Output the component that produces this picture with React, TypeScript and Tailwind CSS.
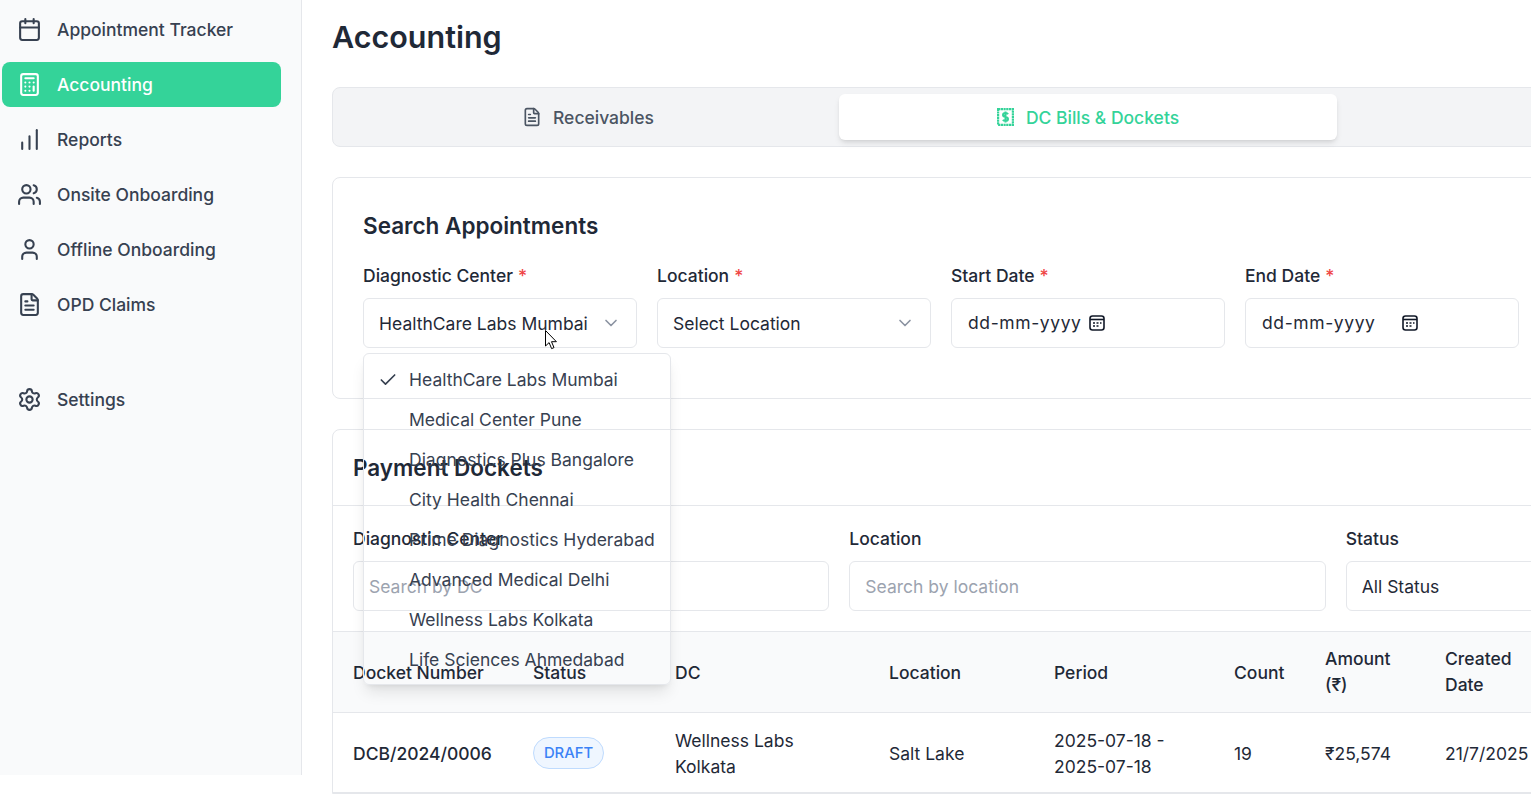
import React from 'react';
import { Calculator, Calendar, ChartNoAxesColumnIncreasing, Check, ChevronDown, FileText, Settings, User, Users } from 'lucide-react';

const navItems = [
  { label: 'Appointment Tracker', icon: Calendar },
  { label: 'Accounting', icon: Calculator, active: true },
  { label: 'Reports', icon: ChartNoAxesColumnIncreasing },
  { label: 'Onsite Onboarding', icon: Users },
  { label: 'Offline Onboarding', icon: User },
  { label: 'OPD Claims', icon: FileText },
];

const centers = [
  'HealthCare Labs Mumbai',
  'Medical Center Pune',
  'Diagnostics Plus Bangalore',
  'City Health Chennai',
  'Prime Diagnostics Hyderabad',
  'Advanced Medical Delhi',
  'Wellness Labs Kolkata',
  'Life Sciences Ahmedabad',
];

const NavLink: React.FC<{ label: string; icon: React.ElementType; active?: boolean }> = ({ label, icon: Icon, active }) => (
  <div className={`flex h-[45px] w-[279px] items-center gap-[15px] rounded-lg pl-[15px] text-[17.5px] font-medium ${active ? 'bg-[#34d399] text-white' : 'text-[#374151]'}`}>
    <Icon className="h-[25px] w-[25px] shrink-0" strokeWidth={2} />
    <span className="translate-y-px">{label}</span>
  </div>
);

const Label: React.FC<{ text: string; required?: boolean }> = ({ text, required }) => (
  <div className="text-[17.5px] leading-[24px] font-medium text-[#1f2937]">
    {text}
    {required && <span className="ml-[5px] text-[#ef4444]">*</span>}
  </div>
);

const DateIcon = () => (
  <svg viewBox="0 0 16 16" className="h-4 w-4 shrink-0" fill="none" stroke="#111827" strokeWidth="1.6">
    <rect x="1" y="1" width="14" height="14" rx="2.5" />
    <path d="M1 4.5h14" />
    <path d="M4 8h2M7.5 8h2M11 8h1.5M4 11h2M7.5 11h2" strokeWidth="1.7" />
  </svg>
);

const BillIcon = () => (
  <svg viewBox="0 0 17 18" className="h-[18px] w-[17px] shrink-0" fill="none" stroke="#34d399">
    <rect x="1.1" y="1.1" width="14.8" height="15.8" strokeWidth="2.2" strokeDasharray="2.2 0.5" />
    <path d="M11 6.2C10.6 5.4 9.6 5 8.5 5 7 5 6 5.8 6 7s1 1.7 2.5 2 2.5.8 2.5 2-1 2-2.5 2c-1.1 0-2.1-.4-2.5-1.2M8.5 3.5v11" strokeWidth="2" />
  </svg>
);

const DateField: React.FC<{ label: string; iconGap: string }> = ({ label, iconGap }) => (
  <div>
    <Label text={label} required />
    <div className="mt-[10px] flex h-[50px] items-center rounded-md border border-[#e5e7eb] pl-[16px] text-[17.5px] tracking-[0.6px] text-[#1f2937]">
      <span>dd-mm-yyyy</span>
      <span className={iconGap}>
        <DateIcon />
      </span>
    </div>
  </div>
);

const SelectField: React.FC<{ label: string; value: string }> = ({ label, value }) => (
  <div>
    <Label text={label} required />
    <div className="mt-[10px] flex h-[50px] items-center justify-between rounded-md border border-[#e5e7eb] pr-[15px] pl-[15px] text-[17.5px] text-[#1f2937]">
      <span className="translate-y-px">{value}</span>
      <ChevronDown className="h-5 w-5 text-[#8b93a1]" />
    </div>
  </div>
);

const App: React.FC = () => {
  return (
    <div className="flex h-[805px] w-[1531px] overflow-hidden bg-white font-['Inter',sans-serif]">
      <aside className="flex h-[775px] w-[302px] shrink-0 flex-col gap-[10px] border-r border-[#e5e7eb] bg-[#f9fafb] pt-[7px] pl-[2px]">
        {navItems.map((item) => (
          <NavLink key={item.label} {...item} />
        ))}
        <div className="mt-[40px]">
          <NavLink label="Settings" icon={Settings} />
        </div>
      </aside>

      <main className="relative w-[1571px] shrink-0 px-[30px]">
        <h1 className="pt-[17px] text-[30.5px] leading-[40px] font-semibold text-[#1f2937]">Accounting</h1>

        {/* tabs */}
        <div className="mt-[30px] grid h-[60px] grid-cols-[repeat(3,498px)] gap-[2px] rounded-lg border border-[#e5e7eb] bg-[#f3f4f6] p-[6px]">
          <div className="flex items-center justify-center gap-[11px] text-[17.5px] font-medium text-[#4b5563]">
            <FileText className="h-5 w-5" />
            <span className="translate-y-px">Receivables</span>
          </div>
          <div className="flex items-center justify-center gap-[12px] rounded-md bg-white text-[17.5px] font-medium text-[#34d399] shadow-md">
            <BillIcon />
            <span className="translate-y-px">DC Bills &amp; Dockets</span>
          </div>
          <div />
        </div>

        {/* search */}
        <section className="relative mt-[30px] h-[222px] rounded-lg border border-[#e5e7eb] px-[30px] pt-[30px]">
          <h2 className="text-[22.5px] leading-[36px] font-semibold text-[#1f2937]">Search Appointments</h2>
          <div className="mt-[20px] grid grid-cols-[repeat(5,274px)] gap-[20px]">
            <SelectField label="Diagnostic Center" value="HealthCare Labs Mumbai" />
            <SelectField label="Location" value="Select Location" />
            <DateField label="Start Date" iconGap="ml-[7px]" />
            <DateField label="End Date" iconGap="ml-[26px]" />
          </div>

          <div className="absolute top-[175px] left-[30px] z-10 h-[332px] w-[308px] overflow-hidden rounded-md border border-[#e5e7eb] pt-[6px] text-[17.5px] text-[#374151] shadow-lg">
            {centers.map((name, i) => (
              <div key={name} className="relative flex h-[40px] items-center pl-[45px]">
                {i === 0 && <Check className="absolute left-[14px] h-5 w-5" strokeWidth={2} />}
                {name}
              </div>
            ))}
          </div>
        </section>

        {/* dockets */}
        <section className="mt-[30px] rounded-t-lg border border-[#e5e7eb]">
          <div className="flex h-[76px] items-center border-b border-[#e5e7eb] px-[20px] text-[22.5px] font-semibold text-[#1f2937]">
            Payment Dockets
          </div>
          <div className="grid h-[126px] grid-cols-3 gap-[20px] border-b border-[#e5e7eb] px-[20px] pt-[21px]">
            {[
              { label: 'Diagnostic Center', ph: 'Search by DC' },
              { label: 'Location', ph: 'Search by location' },
            ].map((f) => (
              <div key={f.label}>
                <Label text={f.label} />
                <div className="mt-[10px] flex h-[50px] items-center rounded-md border border-[#e5e7eb] px-[15px] text-[17.5px] text-[#9ca3af]">
                  <span className="translate-y-px">{f.ph}</span>
                </div>
              </div>
            ))}
            <div>
              <Label text="Status" />
              <div className="mt-[10px] flex h-[50px] items-center rounded-md border border-[#e5e7eb] px-[15px] text-[17.5px] text-[#1f2937]">
                <span className="translate-y-px">All Status</span>
              </div>
            </div>
          </div>

          <table className="w-full table-fixed text-left text-[17.5px] leading-[26px] text-[#1f2937]">
            <thead>
              <tr className="h-[80px] border-b border-[#e5e7eb] bg-[#f9fafb]">
                <th className="w-[200px] pt-[2px] pl-[20px] font-medium">Docket Number</th>
                <th className="w-[142px] pt-[2px] font-medium">Status</th>
                <th className="w-[214px] pt-[2px] font-medium">DC</th>
                <th className="w-[165px] pt-[2px] font-medium">Location</th>
                <th className="w-[180px] pt-[2px] font-medium">Period</th>
                <th className="w-[91px] pt-[2px] font-medium">Count</th>
                <th className="w-[120px] font-medium">
                  Amount
                  <br />
                  (₹)
                </th>
                <th className="w-[120px] font-medium">
                  Created
                  <br />
                  Date
                </th>
                <th />
              </tr>
            </thead>
            <tbody>
              <tr className="h-[80px] border-b border-[#e5e7eb]">
                <td className="pt-[4px] pl-[20px] font-medium">DCB/2024/0006</td>
                <td className="pt-[2px]">
                  <span className="inline-flex h-[32px] w-[71px] items-center justify-center rounded-full border border-[#bfdbfe] bg-[#eff6ff] text-[14.8px] font-medium text-[#3b82f6]">DRAFT</span>
                </td>
                <td className="pt-[4px]">
                  Wellness Labs
                  <br />
                  Kolkata
                </td>
                <td className="pt-[4px]">Salt Lake</td>
                <td className="pt-[4px]">
                  2025-07-18 -
                  <br />
                  2025-07-18
                </td>
                <td className="pt-[4px]">19</td>
                <td className="pt-[4px]">₹25,574</td>
                <td className="pt-[4px]">21/7/2025</td>
                <td />
              </tr>
            </tbody>
          </table>
        </section>

        {/* mouse pointer captured in the screenshot */}
        <svg viewBox="0 0 12 20" className="absolute top-[330px] left-[243px] z-20 h-[20px] w-[12px]">
          <path d="M.5.5v15.5l3.6-3.4 2.5 6 2.4-1-2.5-5.9h4.9z" fill="#fff" stroke="#000" strokeWidth="1" />
        </svg>
      </main>
    </div>
  );
};

export default App;
